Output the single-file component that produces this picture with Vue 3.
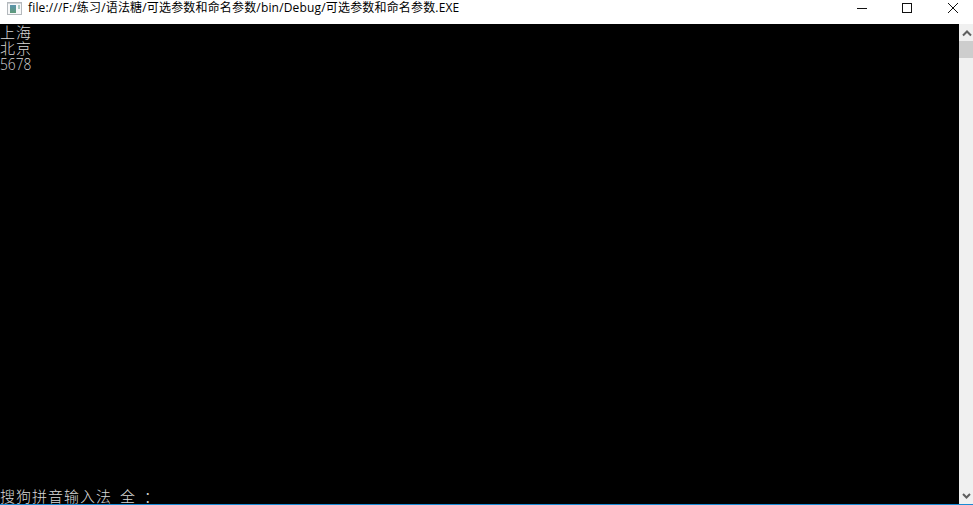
<script setup>
const title = 'file:///F:/练习/语法糖/可选参数和命名参数/bin/Debug/可选参数和命名参数.EXE'
const cjkLines = ['上海', '北京']
</script>

<template>
  <div class="window">
    <header class="titlebar">
      <svg class="app-icon" width="15" height="13" viewBox="0 0 15 13">
        <defs>
          <linearGradient id="pane" x1="0" y1="0" x2="0" y2="1">
            <stop offset="0" stop-color="#5a93ad" />
            <stop offset="1" stop-color="#5f9a78" />
          </linearGradient>
        </defs>
        <rect x="0.5" y="0.5" width="14" height="12" fill="#f7f8f9" stroke="#b4b9bd" />
        <rect x="1" y="1" width="13" height="1" fill="#d0d4d8" />
        <rect x="3" y="3" width="6" height="8" fill="url(#pane)" />
        <rect x="11" y="3" width="2" height="4" fill="#a9c9c0" />
      </svg>
      <span class="title">{{ title }}</span>
      <div class="controls">
        <svg class="control" width="46" height="16" viewBox="0 0 46 16">
          <path d="M22 8.500h10" stroke="#111" fill="none" />
        </svg>
        <svg class="control" width="46" height="16" viewBox="0 0 46 16">
          <rect x="21.500" y="3.500" width="9" height="9" stroke="#111" fill="none" />
        </svg>
        <svg class="control" width="46" height="16" viewBox="0 0 46 16">
          <path d="M21 3l10 10M31 3L21 13" stroke="#111" fill="none" />
        </svg>
      </div>
    </header>
    <main class="body">
      <div class="console">
        <div class="output">
          <div v-for="line in cjkLines" :key="line" class="line">{{ line }}</div>
          <div class="line num">5678</div>
        </div>
        <div class="ime">搜狗拼音输入法<span class="gap"> </span>全<span class="gap"> </span>：</div>
      </div>
      <aside class="scrollbar">
        <svg class="arrow" width="14" height="14" viewBox="0 0 14 14">
          <path d="M4 8.500l4-4 4 4" stroke="#5f5f5f" stroke-width="2" fill="none" />
        </svg>
        <div class="thumb"></div>
        <div class="track"></div>
        <svg class="arrow" width="14" height="14" viewBox="0 0 14 14">
          <path d="M4 4l3.500 3.500L11 4" stroke="#5f5f5f" stroke-width="2" fill="none" />
        </svg>
      </aside>
    </main>
    <div class="edge"></div>
  </div>
</template>

<style>
html, body { margin: 0; background: #fff; }
</style>

<style scoped>
.window {
  width: 973px;
  height: 505px;
  display: flex;
  flex-direction: column;
  overflow: hidden;
}
.titlebar {
  height: 24px;
  display: flex;
  align-items: flex-start;
  background: #fff;
  padding-left: 7px;
  box-sizing: border-box;
}
.app-icon { flex: none; margin-top: 2px; }
.title {
  margin-left: 6px;
  font-family: "Open Sans", "Noto Sans CJK SC", sans-serif;
  font-size: 12px;
  line-height: 16px;
  letter-spacing: 0.17px;
  color: #000;
  white-space: nowrap;
}
.controls {
  margin-left: auto;
  display: flex;
}
.control { display: block; }
.body {
  flex: 1;
  display: flex;
  min-height: 0;
}
.console {
  flex: 1;
  background: #000;
  color: #d8d8d8;
  font-family: "Noto Sans CJK SC", sans-serif;
  font-size: 15px;
  font-weight: 300;
  line-height: 16px;
  letter-spacing: 1px;
  display: flex;
  flex-direction: column;
  justify-content: space-between;
}
.line { height: 16px; }
.num {
  font-family: "Open Sans", sans-serif;
  font-weight: 300;
  font-size: 16px;
  line-height: 16px;
  letter-spacing: 0;
  transform: scaleX(0.86);
  transform-origin: left;
}
.ime {
  height: 16px;
  white-space: pre;
}
.gap {
  display: inline-block;
  width: 8px;
}
.scrollbar {
  width: 14px;
  background: #f0f0f0;
  display: flex;
  flex-direction: column;
}
.arrow { display: block; flex: none; margin-top: 3px; }
.thumb {
  height: 17px;
  background: #cdcdcd;
}
.track { flex: 1; }
.edge {
  height: 1px;
  background: #1a8ad4;
  flex: none;
}
</style>
